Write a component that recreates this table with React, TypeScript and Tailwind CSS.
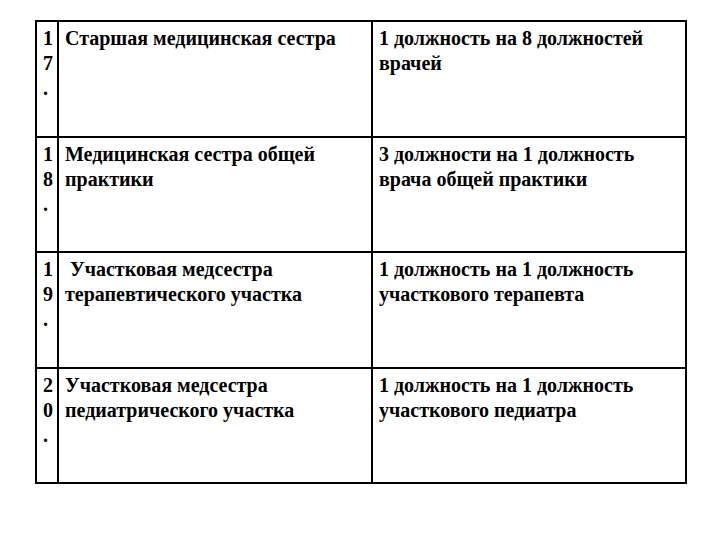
const rows = [
  {
    num: "17.",
    title: "Старшая медицинская сестра",
    norm: "1 должность на 8 должностей врачей",
  },
  {
    num: "18.",
    title: "Медицинская сестра общей практики",
    norm: "3 должности на 1 должность врача общей практики",
  },
  {
    num: "19.",
    title: "\u00a0Участковая медсестра терапевтического участка",
    norm: "1 должность на 1 должность участкового терапевта",
  },
  {
    num: "20.",
    title: "Участковая медсестра педиатрического участка",
    norm: "1 должность на 1 должность участкового педиатра",
  },
];

export default function App() {
  return (
    <div className="w-[720px] h-[540px] bg-white pt-[20px] pl-[35px] font-[family-name:Liberation_Serif,serif] text-[20px] leading-[25px] font-bold text-black">
      <div className="grid w-fit grid-cols-[22px_314px_314px] auto-rows-[115.5px] border-t-2 border-l-2 border-black">
        {rows.map((row) => (
          <div key={row.num} className="contents">
            {/* number column: digits stacked like in the original doc */}
            <div className="border-r-2 border-b-2 border-black pl-[6px] pt-[4px]">
              {row.num.split("").map((ch, i) => (
                <div key={i}>{ch}</div>
              ))}
            </div>
            <div className="border-r-2 border-b-2 border-black pl-[6px] pr-2 pt-[4px]">
              {row.title}
            </div>
            <div className="border-r-2 border-b-2 border-black pl-[6px] pr-2 pt-[4px]">
              {row.norm}
            </div>
          </div>
        ))}
      </div>
    </div>
  );
}
